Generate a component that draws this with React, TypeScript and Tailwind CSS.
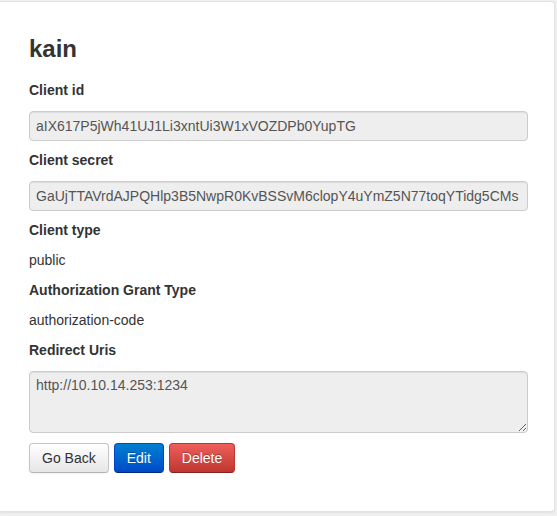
import React from "react";

export default function App() {
  const font = { fontFamily: '"Liberation Sans", Arial, sans-serif' };
  return (
    <div className="w-[557px] h-[516px] bg-[#f0f0f0] pt-[1px] pr-[2px] pb-[4px]" style={font}>
      <div className="h-full bg-white border border-[#e3e3e3] border-l-0 rounded-r-[4px] shadow-[0_1px_2px_rgba(0,0,0,0.06)] pl-[29px] pr-[26px] pt-[33px] text-[#333]">
        <h2 className="text-[24px] leading-[27px] font-bold text-[#333] m-0">kain</h2>
        <div className="mt-[18px] text-[14px] leading-[20px] font-bold">Client id</div>
        <input
          readOnly
          value="aIX617P5jWh41UJ1Li3xntUi3W1xVOZDPb0YupTG"
          className="mt-[11px] block w-full h-[30px] px-[6px] text-[14px] text-[#555] bg-[#eeeeee] border border-[#cccccc] rounded-[4px] shadow-[inset_0_1px_1px_rgba(0,0,0,0.075)] outline-none"
          style={font}
        />
        <div className="mt-[9px] text-[14px] leading-[20px] font-bold">Client secret</div>
        <input
          readOnly
          value="GaUjTTAVrdAJPQHlp3B5NwpR0KvBSSvM6clopY4uYmZ5N77toqYTidg5CMs"
          className="mt-[11px] block w-full h-[30px] px-[6px] text-[14px] text-[#555] bg-[#eeeeee] border border-[#cccccc] rounded-[4px] shadow-[inset_0_1px_1px_rgba(0,0,0,0.075)] outline-none"
          style={font}
        />
        <div className="mt-[9px] text-[14px] leading-[20px] font-bold">Client type</div>
        <div className="mt-[10px] text-[14px] leading-[20px]">public</div>
        <div className="mt-[10px] text-[14px] leading-[20px] font-bold">Authorization Grant Type</div>
        <div className="mt-[10px] text-[14px] leading-[20px]">authorization-code</div>
        <div className="mt-[10px] text-[14px] leading-[20px] font-bold">Redirect Uris</div>
        <textarea
          readOnly
          value="http://10.10.14.253:1234"
          className="mt-[11px] block w-full h-[62px] px-[6px] py-[3px] text-[14px] leading-[20px] text-[#555] bg-[#eeeeee] border border-[#cccccc] rounded-[4px] shadow-[inset_0_1px_1px_rgba(0,0,0,0.075)] outline-none resize"
          style={font}
        />
        <div className="mt-[10px] flex gap-[5px]">
          <button
            className="h-[30px] px-[12px] text-[14px] text-[#333] border border-[#c5c5c5] border-b-[#b3b3b3] rounded-[4px] bg-gradient-to-b from-white to-[#e6e6e6] shadow-[inset_0_1px_0_rgba(255,255,255,0.2),0_1px_2px_rgba(0,0,0,0.05)]"
            style={font}
          >
            Go Back
          </button>
          <button
            className="h-[30px] px-[12px] text-[14px] text-white border border-[#0044cc] border-b-[#002a80] rounded-[4px] bg-gradient-to-b from-[#0080d0] to-[#0048c8] [text-shadow:0_-1px_0_rgba(0,0,0,0.25)]"
            style={font}
          >
            Edit
          </button>
          <button
            className="h-[30px] px-[12px] text-[14px] text-white border border-[#bd362f] border-b-[#802420] rounded-[4px] bg-gradient-to-b from-[#ee5f5b] to-[#bd362f] [text-shadow:0_-1px_0_rgba(0,0,0,0.25)]"
            style={font}
          >
            Delete
          </button>
        </div>
      </div>
    </div>
  );
}
